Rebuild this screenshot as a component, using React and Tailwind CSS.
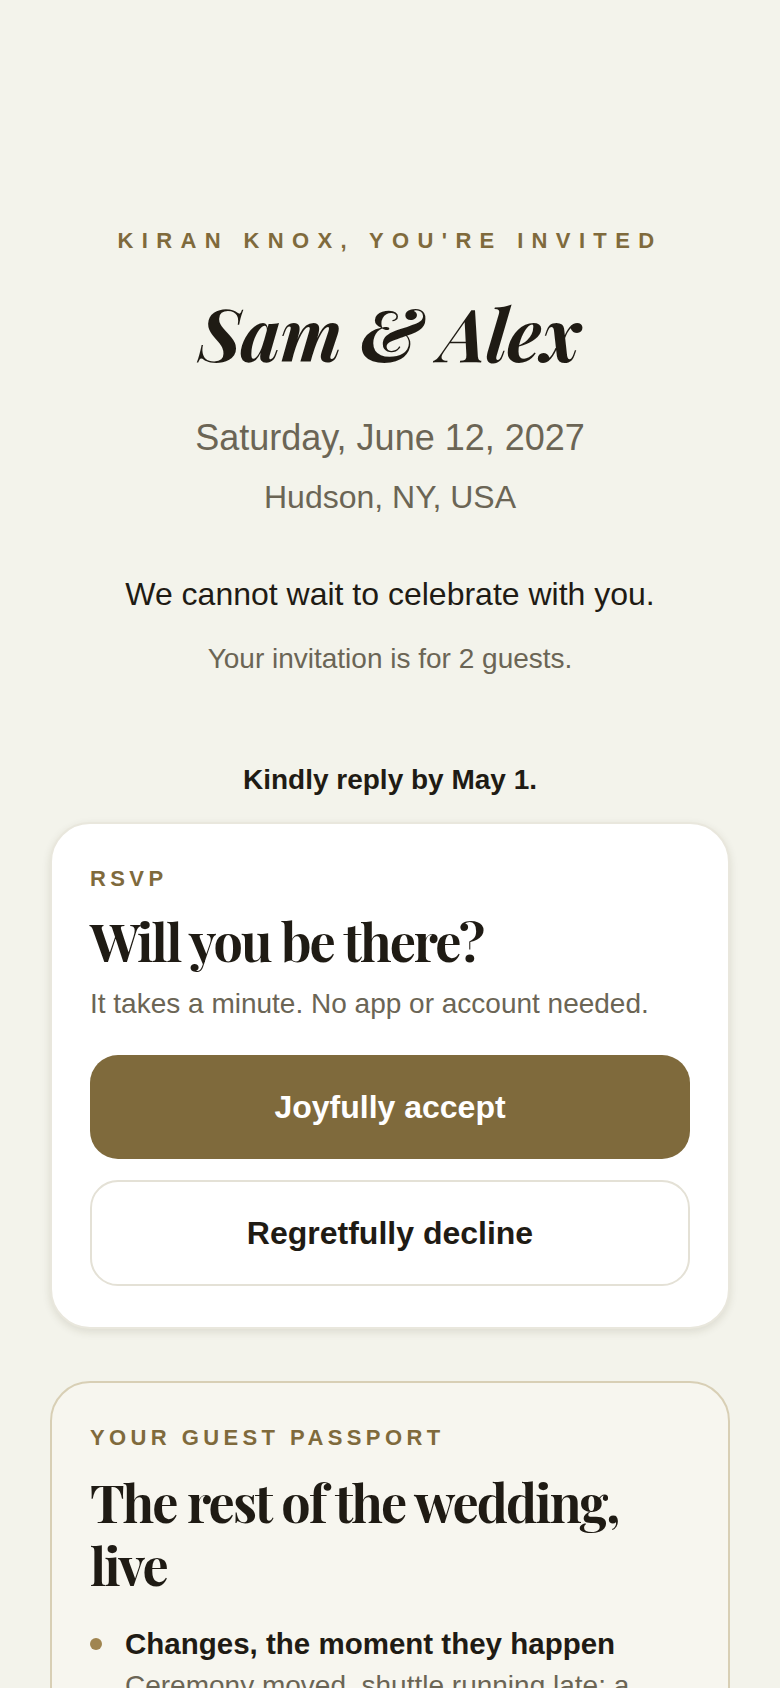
import React from "react";

const serif = "font-['Playfair_Display','Liberation_Serif','DejaVu_Serif',serif]";

export default function App() {
  return (
    <div className="min-h-screen bg-[#f3f3eb] pt-[224px] pb-[80px] px-[50px] font-['Liberation_Sans',Arial,sans-serif] text-[#1f1b14]">
      <div className="flex flex-col items-center text-center">
        <p className="text-[22px] leading-[33px] font-bold tracking-[0.38em] text-[#7f6a3c]">
          KIRAN KNOX, YOU'RE INVITED
        </p>
        <h1 className={`${serif} mt-[36px] italic font-bold text-[72px] leading-[79px] tracking-[-0.005em] text-[#1f1b14]`}>
          Sam &amp; Alex
        </h1>
        <p className="mt-[42px] text-[36px] leading-[48px] text-[#6b6555]">Saturday, June 12, 2027</p>
        <p className="mt-[13px] text-[32px] leading-[44px] text-[#6b6555]">Hudson, NY, USA</p>
        <p className="mt-[51px] text-[32px] leading-[48px] text-[#1f1b14]">We cannot wait to celebrate with you.</p>
        <p className="mt-[20px] text-[28px] leading-[42px] text-[#6b6555]">Your invitation is for 2 guests.</p>
        <p className="mt-[79px] text-[28px] leading-[42px] font-bold text-[#1f1b14]">Kindly reply by May 1.</p>
      </div>

      <section className="mt-[21px] bg-white rounded-[40px] border-2 border-[#e9e7dd] px-[38px] pt-[38px] pb-[41px] shadow-[0_3px_8px_rgba(60,50,20,0.12)]">
        <p className="text-[22px] leading-[33px] font-bold tracking-[0.2em] text-[#7f6a3c]">RSVP</p>
        <h2 className={`${serif} mt-[16px] text-[52px] leading-[60px] font-bold tracking-[-0.036em] text-[#1f1b14]`}>
          Will you be there?
        </h2>
        <p className="mt-[12px] text-[28px] leading-[42px] text-[#6b6555]">
          It takes a minute. No app or account needed.
        </p>
        <div className="mt-[30px] flex flex-col gap-[21px]">
          <button className="w-full h-[104px] rounded-[28px] bg-[#7f6a3c] text-white text-[32px] font-bold">
            Joyfully accept
          </button>
          <button className="w-full h-[106px] rounded-[28px] border-2 border-[#e4e1d6] bg-white text-[#1f1b14] text-[32px] font-bold">
            Regretfully decline
          </button>
        </div>
      </section>

      <section className="mt-[52px] bg-[#f7f6ef] rounded-[40px] border-2 border-[#d8cfb5] px-[38px] pt-[38px] pb-[40px]">
        <p className="text-[22px] leading-[33px] font-bold tracking-[0.2em] text-[#7f6a3c]">YOUR GUEST PASSPORT</p>
        <h2 className={`${serif} mt-[16px] text-[52px] leading-[63px] font-bold tracking-[-0.036em] text-[#1f1b14]`}>
          The rest of the wedding,
          <br />
          live
        </h2>
        <ul className="mt-[27px] flex flex-col gap-[28px]">
          <li className="flex gap-[23px]">
            <div className="h-[42px] flex items-center shrink-0">
              <span className="block w-[12px] h-[12px] rounded-full bg-[#a08550]" />
            </div>
            <div>
              <p className="text-[29.5px] leading-[42px] font-bold text-[#1f1b14]">Changes, the moment they happen</p>
              <p className="text-[28px] leading-[42px] text-[#6b6555]">
                Ceremony moved, shuttle running late: a note reaches you right away.
              </p>
            </div>
          </li>
          <li className="flex gap-[23px]">
            <div className="h-[42px] flex items-center shrink-0">
              <span className="block w-[12px] h-[12px] rounded-full bg-[#a08550]" />
            </div>
            <div>
              <p className="text-[29.5px] leading-[42px] font-bold text-[#1f1b14]">Photos from every guest</p>
              <p className="text-[28px] leading-[42px] text-[#6b6555]">
                See the day through everyone's eyes, all in one place.
              </p>
            </div>
          </li>
        </ul>
      </section>
    </div>
  );
}
